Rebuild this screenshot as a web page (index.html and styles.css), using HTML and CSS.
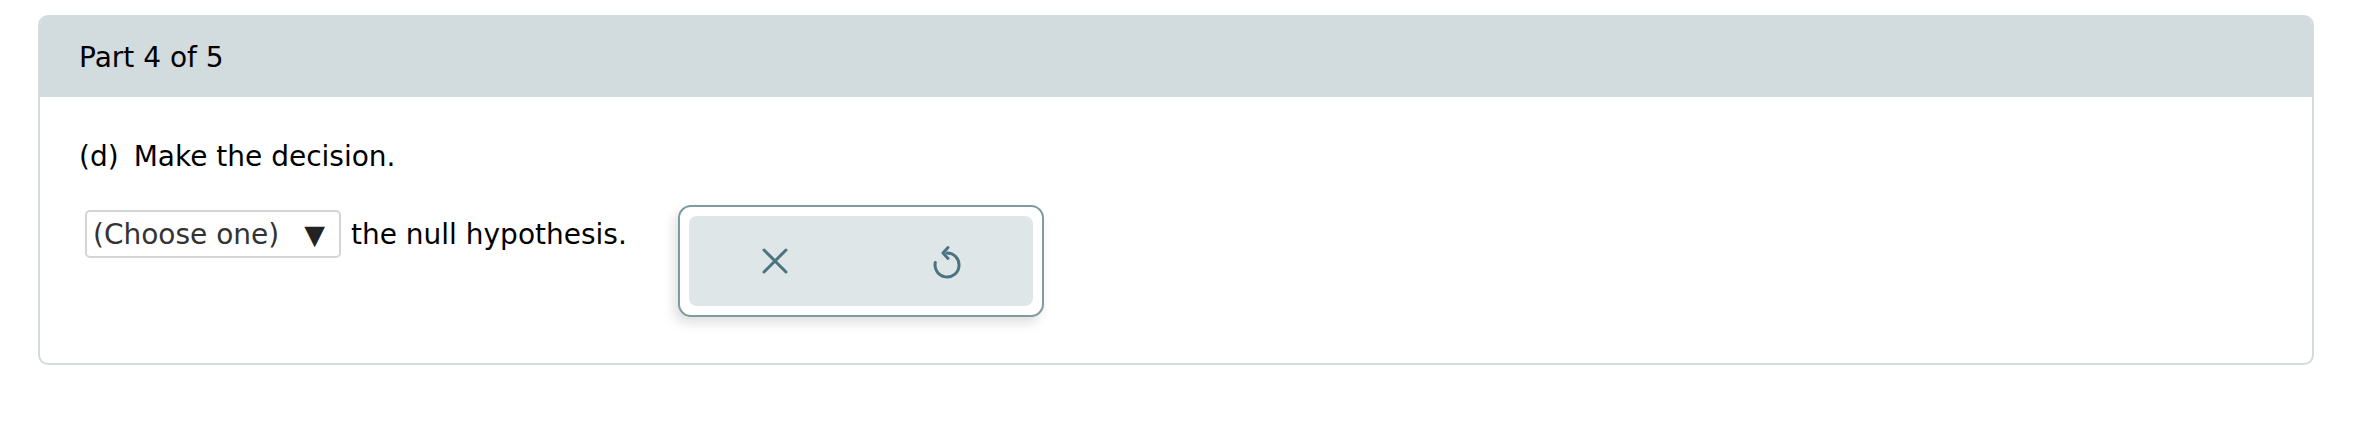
FILE: index.html
```html
<!DOCTYPE html>
<html lang="en">
<head>
<meta charset="utf-8">
<title>Part 4 of 5</title>
<link rel="stylesheet" href="styles.css">
</head>
<body>
<div class="card">
  <div class="card-head">Part 4 of 5</div>
  <div class="card-body">
    <p class="question"><span class="qlabel">(d)</span><span>Make the decision.</span></p>
    <div class="answer-row">
      <div class="sentence">
        <div class="select"><span class="select-text">(Choose one)</span><span class="caret">&#9660;</span></div>
        <span class="tail">the null hypothesis.</span>
      </div>
      <div class="tools">
        <div class="tools-inner">
          <button class="tool" type="button" aria-label="Clear">
            <svg width="26" height="26" viewBox="0 0 26 26"><path d="M2 2 L24 24 M24 2 L2 24" fill="none" stroke="#4b7380" stroke-width="3" stroke-linecap="round"/></svg>
          </button>
          <button class="tool tool-undo" type="button" aria-label="Undo">
            <svg width="30" height="34" viewBox="0 0 30 34"><path d="M15 8 A12 12 0 1 1 3.3 17.5" fill="none" stroke="#4b7380" stroke-width="3" stroke-linecap="round"/><path d="M16 2.5 L11 8 L16 13.5" fill="none" stroke="#4b7380" stroke-width="3" stroke-linecap="round" stroke-linejoin="round"/></svg>
          </button>
        </div>
      </div>
    </div>
  </div>
</div>
</body>
</html>
```

FILE: styles.css
```css
html, body {
  margin: 0;
  background: #ffffff;
}
body {
  padding: 15px 56px 0 38px;
  font-family: "DejaVu Sans", Verdana, sans-serif;
  font-size: 28px;
  color: #000;
}
.card {
  border: 2px solid #d3dbde;
  border-radius: 10px;
  overflow: hidden;
  background: #fff;
}
.card-head {
  background: #d2dbde;
  height: 80px;
  display: flex;
  align-items: center;
  padding-left: 39px;
}
.card-body {
  padding: 43px 39px 46px 39px;
}
.question {
  margin: 0;
  line-height: 33px;
}
.qlabel {
  margin-right: 15px;
}
.answer-row {
  display: flex;
  align-items: flex-start;
  margin-top: 32px;
}
.sentence {
  display: flex;
  align-items: center;
  height: 48px;
  margin-top: 5px;
}
.select {
  box-sizing: border-box;
  height: 48px;
  width: 256px;
  margin-left: 6px;
  border: 2px solid #d4d4d4;
  border-radius: 5px;
  display: flex;
  align-items: center;
  justify-content: space-between;
  padding: 0 14px 0 6px;
  color: #333;
}
.caret {
  color: #222;
  font-size: 27px;
}
.tail {
  margin-left: 10px;
}
.tools {
  box-sizing: border-box;
  margin-left: 51px;
  width: 366px;
  height: 112px;
  border: 2px solid #7d9ba3;
  border-radius: 13px;
  padding: 9px;
  background: #fff;
  box-shadow: -4px 6px 12px rgba(0, 0, 0, 0.13);
}
.tools-inner {
  height: 100%;
  background: #dfe6e8;
  border-radius: 8px;
  display: grid;
  grid-template-columns: 1fr 1fr;
}
.tool {
  border: 0;
  background: transparent;
  padding: 0;
  display: flex;
  align-items: center;
  justify-content: center;
}
.tool-undo svg {
  margin-top: 2px;
}
```
